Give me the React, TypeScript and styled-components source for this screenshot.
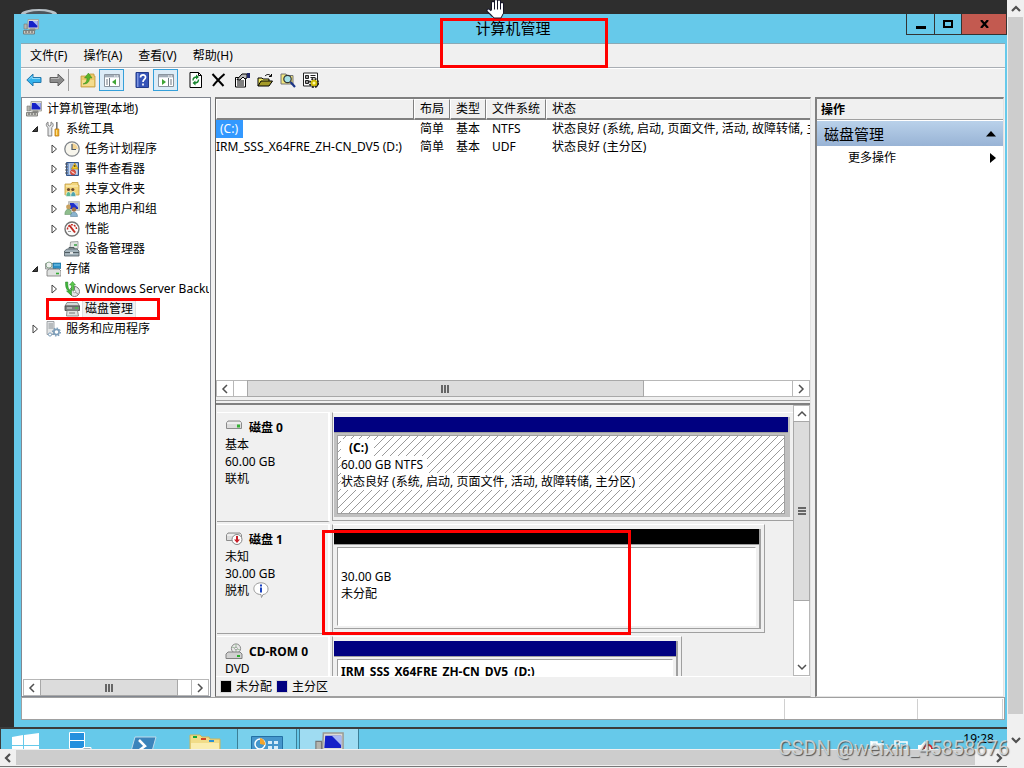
import React from "react";
import styled, { createGlobalStyle, css } from "styled-components";

const Global = createGlobalStyle`
  *, *::before, *::after { box-sizing: border-box; }
  body {
    margin: 0;
    overflow: hidden;
    background: #f0f0f0;
    color: #000;
    font: 12px/16px "Noto Sans", "Noto Sans CJK SC", sans-serif;
  }
  button { font: inherit; color: inherit; border: 0; padding: 0; background: none; }
  svg { display: block; flex: none; }
`;

const Viewer = styled.div`
  display: grid;
  grid-template-columns: minmax(0, 1fr) 17px;
  grid-template-rows: minmax(0, 1fr) 19px;
  height: 100vh;
  position: relative;
`;

const Desktop = styled.div`
  position: relative;
  display: flex;
  flex-direction: column;
  padding-top: 14px;
  background: #2e2e2e;
  overflow: hidden;
`;

const DesktopIcon = styled.svg`
  position: absolute;
  left: 21px;
  top: 8px;
`;

const Cursor = styled.svg`
  position: absolute;
  left: 486px;
  top: 0;
  z-index: 3;
`;

const Window = styled.main`
  position: relative;
  flex: 1;
  min-height: 0;
  display: flex;
  flex-direction: column;
  margin-left: 14px;
  padding: 0 2px 7px 7px;
  background: #66c9ea;
`;

const TitleBar = styled.header`
  position: relative;
  display: flex;
  justify-content: center;
  height: 29px;
  flex: none;
`;

const TitleIcon = styled.span`
  position: absolute;
  left: 2px;
  top: 5px;
`;

const Title = styled.h1`
  margin: 0;
  font-size: 15px;
  line-height: 28px;
  font-weight: 400;
`;

const Captions = styled.div`
  position: absolute;
  right: -2px;
  top: 0;
  display: flex;
  border: 1px solid #333;
  border-top: 0;
`;

const Caption = styled.button<{ $close?: boolean }>`
  display: grid;
  place-items: center;
  width: ${(p) => (p.$close ? 45 : 27)}px;
  height: 20px;
  background: ${(p) => (p.$close ? "#c35a50" : "transparent")};
  & + & { border-left: 1px solid #333; }
`;

const Client = styled.div`
  flex: 1;
  min-height: 0;
  display: flex;
  flex-direction: column;
  background: #f0f0f0;
  border-top: 1px solid #8aa9b5;
`;

const MenuBar = styled.nav`
  display: flex;
  height: 24px;
  flex: none;
  padding-left: 1px;
  border-bottom: 1px solid #a9aeb4;
`;

const MenuItem = styled.button`
  padding: 0 8px;
  line-height: 23px;
`;

const ToolBar = styled.div`
  display: flex;
  align-items: center;
  height: 29px;
  flex: none;
  padding: 0 1px 6px;
  border-top: 1px solid #fff;
`;

const Tool = styled.button<{ $on?: boolean }>`
  display: grid;
  place-items: center;
  width: ${(p) => (p.$on ? 25 : 23)}px;
  height: 22px;
  ${(p) =>
    p.$on &&
    css`
      border: 1px solid #35a0da;
      background: #dcecf7;
    `}
`;

const ToolGap = styled.span<{ $line?: boolean }>`
  width: ${(p) => (p.$line ? 8 : 6)}px;
  height: 22px;
  border-left: ${(p) => (p.$line ? "1px solid #a0a0a0" : "0")};
`;

const Panes = styled.div`
  flex: 1;
  min-height: 0;
  display: grid;
  grid-template-columns: 190px minmax(0, 1fr) 189px;
  column-gap: 4px;
  padding-right: 1px;
`;

const TreePane = styled.section`
  display: flex;
  flex-direction: column;
  min-height: 0;
  padding: 1px 1px 0;
  background: #fff;
  border: 1px solid #828790;
`;

const TreeList = styled.ul`
  flex: 1;
  margin: 0;
  padding: 0;
  list-style: none;
  overflow: hidden;
`;

const TreeRow = styled.li<{ $level: number }>`
  position: relative;
  display: flex;
  align-items: center;
  height: 20px;
  padding-left: ${(p) => [3, 5, 24][p.$level]}px;
  white-space: nowrap;
`;

const Twisty = styled.span`
  display: grid;
  place-items: center;
  flex: none;
  width: 14px;
  margin-right: 3px;
`;

const TreeLabel = styled.span<{ $selected?: boolean }>`
  flex: none;
  margin-left: 3px;
  padding: 0 2px;
  line-height: 18px;
  background: ${(p) => (p.$selected ? "#f0f0f0" : "transparent")};
  outline: ${(p) => (p.$selected ? "1px solid #dedede" : "0")};
`;

const CenterPane = styled.section`
  display: flex;
  flex-direction: column;
  min-height: 0;
  min-width: 0;
  border: 1px solid #a0a0a0;
  border-top: 2px solid #808080;
  border-right: 1px solid #e3e3e3;
  border-left-color: #696969;
`;

const VolumeArea = styled.div`
  flex: 1;
  min-height: 0;
  overflow: hidden;
  background: #fff;
`;

const VolumeTable = styled.table`
  width: 100%;
  table-layout: fixed;
  border-collapse: separate;
  border-spacing: 0;
  white-space: nowrap;
`;

const VolumeCol = styled.col<{ $w?: number }>`
  width: ${(p) => (p.$w ? p.$w + "px" : "auto")};
`;

const HeadCell = styled.th`
  height: 21px;
  padding: 0 0 0 5px;
  font-weight: 400;
  text-align: left;
  background: #f0f0f0;
  border: solid;
  border-width: 1px 1px 2px;
  border-color: #fff #808080 #808080 #fff;
  &:last-child { border-right: 0; }
`;

const Cell = styled.td`
  height: 18px;
  padding: 0 0 0 6px;
  line-height: 18px;
  overflow: hidden;
  &:first-child { padding: 0; }
`;

const Chosen = styled.span`
  display: inline-block;
  padding: 0 5px 0 4px;
  background: #3399ff;
  color: #fff;
`;

const Splitter = styled.div`
  height: 8px;
  flex: none;
  border-bottom: 2px solid #808080;
  background: linear-gradient(#f0f0f0 3px, #a0a0a0 3px, #a0a0a0 4px, #f0f0f0 4px);
`;

const DiskArea = styled.div`
  display: flex;
  height: 271px;
  flex: none;
`;

const DiskList = styled.div`
  flex: 1;
  min-width: 0;
  padding-top: 5px;
  overflow: hidden;
`;

const DiskRow = styled.article`
  display: grid;
  grid-template-columns: 116px minmax(0, 1fr);
  height: 112px;
`;

const DiskInfo = styled.div`
  margin: 2px 2px 0 1px;
  padding: 6px 0 0 8px;
  line-height: 17px;
  border-top: 1px solid #fff;
  border-right: 2px solid #fff;
  border-bottom: 1px solid #a0a0a0;
`;

const DiskName = styled.h2`
  display: flex;
  gap: 6px;
  margin: 0;
  font-size: 12px;
  line-height: 17px;
  font-weight: 700;
`;

const InfoLine = styled.div`
  display: flex;
  gap: 4px;
`;

const DiskFrame = styled.div<{ $fit: string }>`
  width: ${(p) => p.$fit};
  margin: 2px 0 1px;
  padding: 4px 3px 3px 1px;
  border: 1px solid #a0a0a0;
  border-top-color: #fff;
`;

const Volume = styled.div<{ $picked?: boolean }>`
  display: flex;
  flex-direction: column;
  height: 100px;
  background: ${(p) => (p.$picked ? "#c0c0c0" : "#f0f0f0")};
  border-right: 2px solid ${(p) => (p.$picked ? "#c0c0c0" : "#a0a0a0")};
  border-bottom: 1px solid ${(p) => (p.$picked ? "#c0c0c0" : "#a0a0a0")};
`;

const Stripe = styled.div<{ $color: string }>`
  height: 16px;
  flex: none;
  background: ${(p) => p.$color};
  border-bottom: 1px solid #a0a0a0;
`;

const VolumeBody = styled.div<{ $hatched?: boolean }>`
  flex: 1;
  margin: 2px 3px 2px;
  padding: 3px;
  line-height: 17px;
  white-space: pre;
  background-color: #fff;
  border: 1px solid #a0a0a0;
  ${(p) =>
    p.$hatched
      ? css`
          background-image: linear-gradient(135deg, transparent 46%, #9a9a9a 46%, #9a9a9a 54%, transparent 54%);
          background-size: 8px 8px;
        `
      : css`
          border-right-color: #fff;
          border-bottom-color: #fff;
        `}
`;

const VolumeText = styled.span`
  display: block;
  width: fit-content;
  min-height: 17px;
  padding-right: 4px;
  background: #fff;
`;

const VolumeName = styled(VolumeText)<{ $inset?: boolean }>`
  font-weight: 700;
  padding: 0 6px 0 ${(p) => (p.$inset ? 8 : 0)}px;
`;

const Legend = styled.footer`
  display: flex;
  align-items: center;
  gap: 4px;
  height: 20px;
  flex: none;
  padding-left: 4px;
  border-top: 1px solid #fff;
`;

const Swatch = styled.span<{ $color: string }>`
  width: 12px;
  height: 13px;
  border: 1px solid #d8d8d8;
  background: ${(p) => p.$color};
`;

const ActionsPane = styled.aside`
  background: #fff;
  border: 1px solid #e3e3e3;
  border-top: 2px solid #808080;
  border-left: 2px solid #808080;
`;

const ActionsHead = styled.h2`
  margin: 0 0 1px;
  padding-left: 4px;
  height: 21px;
  font-size: 12px;
  line-height: 21px;
  font-weight: 700;
  background: #f0f0f0;
  border-bottom: 1px solid #a0a0a0;
`;

const ActionsGroup = styled.button`
  display: flex;
  width: 100%;
  align-items: center;
  justify-content: space-between;
  height: 25px;
  padding: 0 7px;
  font-size: 15px;
  background: linear-gradient(#b9d1ea, #98b3d5);
`;

const ActionItem = styled.button`
  display: flex;
  width: 100%;
  align-items: center;
  justify-content: space-between;
  height: 23px;
  padding: 0 7px 0 31px;
`;

const StatusBar = styled.footer`
  display: flex;
  justify-content: flex-end;
  height: 23px;
  flex: none;
  padding: 1px 1px 0;
  background: #fff;
  border: 1px solid #a0a0a0;
`;

const StatusCell = styled.span`
  width: 133px;
  border-left: 1px solid #d0d0d0;
  &:last-child { width: 86px; border-right: 1px solid #d0d0d0; }
`;

/* Classic scroll bar, used along both axes */
const Bar = styled.div<{ $vertical?: boolean }>`
  display: flex;
  flex: none;
  flex-direction: ${(p) => (p.$vertical ? "column" : "row")};
  ${(p) => (p.$vertical ? "width: 17px;" : "height: 17px;")}
  background: #fff;
  border: 1px solid #b8b8b8;
`;

const BarArrow = styled.button<{ $vertical?: boolean }>`
  display: grid;
  place-items: center;
  flex: none;
  width: ${(p) => (p.$vertical ? "auto" : "16px")};
  height: ${(p) => (p.$vertical ? "16px" : "auto")};
`;

const BarSpace = styled.span<{ $grow: number }>`
  flex: ${(p) => p.$grow} 1 0;
`;

const BarThumb = styled.span<{ $grow: number }>`
  display: grid;
  place-items: center;
  flex: ${(p) => p.$grow} 1 0;
  background: #dcdcdc;
  outline: 1px solid #a8a8a8;
`;

const Divider = styled.span`
  flex: none;
  width: 1px;
  height: 1px;
  align-self: stretch;
  min-height: 100%;
  background: #b8b8b8;
`;

const PageBar = styled.div<{ $vertical?: boolean }>`
  display: flex;
  flex-direction: ${(p) => (p.$vertical ? "column" : "row")};
  padding: 1px;
  background: #f0f0f0;
  ${(p) => !p.$vertical && "border-bottom: 1px solid #777; margin-bottom: 1px; padding: 1px 0;"}
`;

const PageThumb = styled.span<{ $grow: number }>`
  flex: ${(p) => p.$grow} 1 0;
  background: #cdcdcd;
`;

const TaskBar = styled.footer`
  position: relative;
  display: flex;
  height: 22px;
  flex: none;
  border-top: 2px solid #3c3c3c;
  border-left: 1px solid #3c3c3c;
  background: #66c9ea;
  overflow: hidden;
`;

const Task = styled.button<{ $state?: "open" | "active" }>`
  display: flex;
  justify-content: center;
  align-items: flex-start;
  width: 60px;
  margin-right: 2px;
  padding-top: 3px;
  background: ${(p) => (p.$state === "active" ? "#9fdcf2" : p.$state === "open" ? "#79d0ec" : "none")};
  border: solid #3c7f97;
  border-width: ${(p) => (p.$state ? "0 1px" : "0")};
`;

const StartButton = styled(Task)`
  width: 38px;
  margin-right: 12px;
  justify-content: flex-end;
`;

const Tray = styled.div`
  display: flex;
  gap: 8px;
  margin-left: auto;
  padding: 2px 13px 0 0;
  & > svg { margin-top: 9px; }
`;

const Clock = styled.time`
  margin-left: 22px;
`;

const Watermark = styled.div`
  position: absolute;
  right: 15px;
  bottom: 8px;
  z-index: 4;
  font: 20px/24px Roboto, sans-serif;
  color: rgba(215, 220, 222, 0.85);
  text-shadow: 1px 1px 1px #555;
`;

const Mark = styled.span<{ $x: number; $y: number; $w: number; $h: number }>`
  position: absolute;
  left: ${(p) => p.$x}px;
  top: ${(p) => p.$y}px;
  width: ${(p) => p.$w}px;
  height: ${(p) => p.$h}px;
  border: 3px solid #f00;
  z-index: 2;
  pointer-events: none;
`;

/* ---------- drawings ---------- */

const Svg = ({ children, s = 16 }: { children: React.ReactNode; s?: number }) => (
  <svg width={s} height={s} viewBox="0 0 16 16" fill="none" aria-hidden="true">
    {children}
  </svg>
);

const Computer = ({ s = 16 }: { s?: number }) => (
  <Svg s={s}>
    <path d="M5 .5h10.500v9.500H4.500z" fill="#dcdcd4" stroke="#9a9a94" strokeWidth=".8" />
    <path d="M6 2h8.500v6.500H5.500z" fill="#1420c8" />
    <path d="M9.500 2h5v5z" fill="#a9b8f4" />
    <path d="M1 5h3v5H1z" fill="#b5b5ae" stroke="#777" strokeWidth=".6" />
    <path d="M7 9.500h5l1 2H6z" fill="#8a8a86" />
    <path d="M.5 11.500h11v3.500H.5z" fill="#c9c9c2" stroke="#6d6d6a" strokeWidth=".8" />
    <path d="M2 13h2M5 13h2M8 13h2" stroke="#555" />
  </Svg>
);

const Tools = () => (
  <Svg>
    <path d="M3 1v3l1.500 1L6 4V1c2.500 1 3 4 .8 5.500V15H3V6.500C.5 5 1 2 3 1z" fill="#e4e6e8" stroke="#777" strokeWidth=".9" />
    <path d="M11.800 1v7" stroke="#777" strokeWidth="1.600" />
    <path d="M10 8h3.800v7H10z" fill="#f3b52a" stroke="#b9770c" strokeWidth=".8" />
    <path d="M11.500 9v5" stroke="#fbe08c" />
  </Svg>
);

const ClockIcon = () => (
  <Svg>
    <circle cx="8" cy="8" r="7.200" fill="#f7f5ec" stroke="#80858a" strokeWidth="1.300" />
    <path d="M8 8V2.200A5.800 5.800 0 0 1 13.800 8z" fill="#f3d493" />
    <path d="M8 3v5.500h4" stroke="#4e5b69" strokeWidth="1.200" />
  </Svg>
);

const EventLog = () => (
  <Svg>
    <path d="M2.500 1.500h12v13h-12z" fill="#7fa0d0" stroke="#35568c" />
    <path d="M5 2.500h8.500v11H5z" fill="#c8d8ee" />
    <path d="M6 4h3M6 6h2M6 8h2" stroke="#6c88b8" />
    <path d="M1 3h3M1 6h3M1 9h3M1 12h3" stroke="#555" />
    <path d="M10.800 2l3.400 6H7.500z" fill="#f6cd2c" stroke="#b38708" strokeWidth=".7" />
    <path d="M10.800 4v2" stroke="#222" />
    <circle cx="9" cy="11.300" r="2.600" fill="#e05a48" stroke="#b82a20" strokeWidth=".6" />
    <path d="M7.500 10.500l3 2" stroke="#fff" />
  </Svg>
);

const SharedFolder = () => (
  <Svg>
    <path d="M1 3h6l1-1.500h6V4h1v10H1z" fill="#f3d67c" stroke="#c09a3c" strokeWidth=".8" />
    <path d="M2 5h12" stroke="#fff4c8" />
    <circle cx="4.500" cy="8.500" r="1.600" fill="#6d4a2e" />
    <circle cx="8.800" cy="8.500" r="1.600" fill="#6d4a2e" />
    <path d="M2 15.500c0-6.500 5-6.500 5 0z" fill="#5cb894" stroke="#fff" strokeWidth=".5" />
    <path d="M6.800 15.500c0-6.500 5-6.500 5 0z" fill="#4fa4ae" stroke="#fff" strokeWidth=".5" />
  </Svg>
);

const Users = () => (
  <Svg>
    <path d="M4.500.500h11v9h-11z" fill="#c8c8c2" stroke="#aaa" strokeWidth=".6" />
    <path d="M6 2h8v6H6z" fill="#2030cc" />
    <path d="M9.500 2H14v4.500z" fill="#9caef0" />
    <circle cx="4.500" cy="6" r="2.400" fill="#c9a15f" />
    <circle cx="10" cy="8.500" r="2.200" fill="#a47246" />
    <path d="M.800 13.500c0-7 7-7 7 0z" fill="#8fbd8c" stroke="#5a8a60" strokeWidth=".5" />
    <path d="M6.500 15.500c0-6 7-6 7 0z" fill="#8bb4cf" stroke="#48738f" strokeWidth=".5" />
  </Svg>
);

const Gauge = () => (
  <Svg>
    <circle cx="8" cy="8" r="7" fill="#fafafa" stroke="#727272" strokeWidth="1.400" />
    <path d="M3.500 8.500A4.500 4.500 0 0 1 12.500 8" stroke="#c32a22" strokeWidth="1.500" strokeDasharray="2 1" />
    <path d="M5.500 4.500l5.500 7" stroke="#c32a22" strokeWidth="2" />
    <path d="M4 10.500h3" stroke="#999" />
  </Svg>
);

const Device = () => (
  <Svg>
    <path d="M6.500 1l7.500-.5v7H6z" fill="#e2e5e3" stroke="#8e928f" strokeWidth=".8" />
    <path d="M10 4h3" stroke="#36a040" strokeWidth="1.500" />
    <path d="M3 8h10l2 2v5H.5v-5z" fill="#a3b2ba" stroke="#4f5c62" strokeWidth=".8" />
    <path d="M5 8V6.500h5V8M1 11.500h14" stroke="#4f5c62" />
    <path d="M6 11h3v2H6z" fill="#e3e7e8" />
  </Svg>
);

const Storage = () => (
  <Svg>
    <path d="M.5 2.500h10V8H.5z" fill="#d3d6d5" stroke="#888" strokeWidth=".8" />
    <circle cx="4" cy="4" r="3" fill="#eef2ef" stroke="#739579" strokeWidth=".8" />
    <path d="M8 2h8v5.500H8z" fill="#2a8fc4" stroke="#1f6b95" strokeWidth=".6" />
    <path d="M9 4h6" stroke="#8ad0f0" />
    <path d="M2 9.500L4.500 8H14l2 2v5H2z" fill="#dfe1e0" stroke="#777" strokeWidth=".8" />
    <path d="M11 12.500h3" stroke="#35ad35" strokeWidth="1.600" />
  </Svg>
);

const Backup = () => (
  <Svg>
    <circle cx="10.500" cy="10.500" r="5" fill="#e4e6e6" stroke="#777" />
    <path d="M10.500 5.500v5l4 3" stroke="#8a8a8a" />
    <circle cx="10.500" cy="10.500" r="1.200" fill="#fff" stroke="#777" strokeWidth=".6" />
    <path d="M1.500 1c0 5 .5 7 3 9H2.500l5 4.500V8L6 9.500C4 8 3.800 5 3.800 1z" fill="#41b63c" stroke="#248024" strokeWidth=".5" />
    <path d="M9.500 9.500c.8-2 .5-4 .3-5.500h1.700L8.500.500 5.500 4h1.800c.2 2 .2 4 .2 5z" fill="#5cc94c" stroke="#248024" strokeWidth=".5" />
  </Svg>
);

const DiskManage = () => (
  <Svg>
    <path d="M3 1.500h10.500l2 3.500H1z" fill="#d5d8d7" stroke="#777" strokeWidth=".8" />
    <path d="M1 5h14.500v4.500H1z" fill="#7e8382" stroke="#444" strokeWidth=".8" />
    <path d="M3 7h5" stroke="#ddd" />
    <path d="M11 7h3" stroke="#48c048" strokeWidth="1.400" />
    <path d="M3 9.500h10.500l1 5.500h-12z" fill="#dfe1e0" stroke="#777" strokeWidth=".8" />
    <path d="M5 12h6" stroke="#777" />
  </Svg>
);

const Services = () => (
  <Svg>
    <path d="M2 .5h7v13H2z" fill="#e4e6e7" stroke="#8b9195" strokeWidth=".8" />
    <path d="M3.500 3H8M3.500 5H8M3.500 7H8" stroke="#8b9195" />
    <circle cx="11.500" cy="11" r="2.600" fill="#fff" stroke="#7c9db9" strokeWidth="1.600" />
    <circle cx="11.500" cy="11" r="3.900" stroke="#7c9db9" strokeWidth="1.200" strokeDasharray="1.500 1.500" />
    <circle cx="5" cy="13.500" r="1.600" fill="#fff" stroke="#7c9db9" />
  </Svg>
);

const Arrow = ({ back }: { back?: boolean }) => (
  <Svg>
    <path
      d={back ? "M.8 8L7 2v3.500h8v5H7V14z" : "M15.200 8L9 2v3.500H1v5h8V14z"}
      fill={back ? "#35b2ec" : "#8b8b8b"}
      stroke={back ? "#2679ac" : "#606060"}
    />
    <path d={back ? "M3 7.500L6 4.500v2h8" : "M2 6.500h8v-2"} stroke={back ? "#91dcfa" : "#b8b8b8"} />
  </Svg>
);

const UpFolder = () => (
  <Svg>
    <path d="M1 4h8l1-2h4v2h1v11H1z" fill="#ebc869" stroke="#c29a3e" strokeWidth=".8" />
    <path d="M2 8h12v6H2z" fill="#f5dc8d" />
    <path d="M3 12c3-1 4-3 4-6H4.500L8.500 1 12 6H9.500c0 4-2 6-6.500 6z" fill="#58b52a" stroke="#388518" strokeWidth=".5" />
  </Svg>
);

const PaneIcon = ({ right }: { right?: boolean }) => (
  <Svg>
    <path d="M.5 2.500h15v12H.5z" fill="#fff" stroke="#8a949e" />
    <path d="M1 3h14v3H1z" fill="#a3adb8" />
    <path d="M1 5.500h14" stroke="#dfe4e9" />
    <path d="M10 4h1.500M12.500 4H14" stroke="#fff" />
    <path d={right ? "M10.500 6v8M12 8h2M12 10h2M12 12h2" : "M5.500 6v8M2 8h2M2 10h2M2 12h2"} stroke="#6f7984" />
    <path d={right ? "M4 7v6l4-3z" : "M12 7v6l-4-3z"} fill="#3fa535" />
  </Svg>
);

const Help = () => (
  <Svg>
    <path d="M2 .5h12.500v15H2z" fill="#3554b8" stroke="#233c8c" />
    <path d="M3 1h1.500v14H3z" fill="#7c94e0" />
    <path d="M6.500 5.500C6.500 2 12 2 11.500 5.500 11.500 7.500 9 7.500 9 10M9 11.500v2" stroke="#fff" strokeWidth="1.700" />
  </Svg>
);

const Refresh = () => (
  <Svg>
    <path d="M2 .5h8.500l3 3v12H2z" fill="#fff" stroke="#000" />
    <path d="M10.500.5v3h3" stroke="#000" />
    <path d="M5 8.500c0-3 2-3.500 4-3.500M10.500 7.500c0 3-2 3.500-4 3.500" stroke="#16852d" strokeWidth="1.400" />
    <path d="M8 2.500v5L11 5zM7.500 8.500v5L4.500 11z" fill="#16852d" />
  </Svg>
);

const Delete = () => (
  <Svg>
    <path d="M1.500 2l11 12M13.500 2C9 6 5 10 2 14" stroke="#000" strokeWidth="2" />
  </Svg>
);

const Properties = () => (
  <Svg>
    <path d="M1.500 5.500h10v9.500h-10z" fill="#fff" stroke="#000" />
    <path d="M3 9h7M3 11h7M3 13h7" stroke="#000" />
    <path d="M3 7.500L8 2h5v4l-2 1-2-2-3 3z" fill="#bbb" stroke="#000" />
    <path d="M13 1h3v5h-3z" fill="#222a6a" />
  </Svg>
);

const OpenFolder = () => (
  <Svg>
    <path d="M1 14V6h4l1 1h6v2" fill="#f2eb63" stroke="#000" />
    <path d="M1 14l3-5h11.500l-3.500 5z" fill="#a49a28" stroke="#000" />
    <path d="M8 4c2-2 4-2 6 0M14.500 2v2.500H12" stroke="#000" />
  </Svg>
);

const Search = () => (
  <Svg>
    <path d="M1 2h5l1 1.500h6V12H1z" fill="#f1e67d" stroke="#777" />
    <circle cx="7.500" cy="7" r="3.700" fill="#a5e1e6" stroke="#333" strokeWidth="1.200" />
    <path d="M10.500 10l4.500 5" stroke="#1b3487" strokeWidth="2.200" />
  </Svg>
);

const Settings = () => (
  <Svg>
    <path d="M.5 1h14v13H.5z" fill="#fff" stroke="#222" />
    <path d="M2.500 3.500h3v3h-3zM2.500 8.500h3v3h-3z" stroke="#222" fill="#999" />
    <path d="M7.500 3.500h5M7.500 5.500h5" stroke="#222" strokeWidth="1.200" />
    <circle cx="11" cy="11" r="3.800" stroke="#222" strokeWidth="2.600" strokeDasharray="1.800 1.200" />
    <circle cx="11" cy="11" r="2.400" fill="#fff7a0" stroke="#cdb900" strokeWidth="1.800" />
  </Svg>
);

const Drive = ({ kind }: { kind: "disk" | "offline" | "cd" }) => (
  <svg width="18" height="17" viewBox="0 0 18 17" fill="none" aria-hidden="true">
    {kind === "cd" ? (
      <>
        <circle cx="11" cy="5.500" r="4.600" fill="#e8e8e8" stroke="#8a8a8a" />
        <path d="M11 1v9M7 4l8 3" stroke="#9fbf9f" />
        <circle cx="11" cy="5.500" r="1.300" fill="#fff" stroke="#777" strokeWidth=".6" />
        <path d="M3 9h12l2 2v4.500H1V11z" fill="#d0d0d0" stroke="#808080" />
        <path d="M12 13h3" stroke="#2faf2f" strokeWidth="2" />
      </>
    ) : (
      <>
        <path d="M3 2h12l1.500 2v5.500h-15V4z" fill="#dcdcdc" stroke="#8b8b8b" />
        <path d="M2 4h14" stroke="#fff" />
        {kind === "disk" ? (
          <path d="M12 7h3" stroke="#35b135" strokeWidth="3" />
        ) : (
          <>
            <circle cx="12" cy="8.500" r="5" fill="#fff" stroke="#888" />
            <path d="M11 5h2v3.500h2l-3 3.500-3-3.500h2z" fill="#c81e28" />
          </>
        )}
      </>
    )}
  </svg>
);

const InfoBubble = () => (
  <Svg>
    <path d="M8 .8c9 0 9 11.200 2 11.700L8.500 15.500 8 12.500C-1.500 12.500-1.500.8 8 .8z" fill="#fff" stroke="#999" />
    <path d="M8 2.500v2M8 5.500v5" stroke="#1a42c0" strokeWidth="2" />
  </Svg>
);

const chevrons = {
  left: "M10 4L6 8l4 4",
  right: "M6 4l4 4-4 4",
  up: "M4 10l4-4 4 4",
  down: "M4 6l4 4 4-4",
};

const Chevron = ({ to, bold }: { to: keyof typeof chevrons; bold?: boolean }) => (
  <svg width="16" height="16" viewBox="0 0 16 16" fill="none" aria-hidden="true">
    <path d={chevrons[to]} stroke="#505050" strokeWidth={bold ? 2.2 : 1.5} />
  </svg>
);

const Grip = ({ vertical }: { vertical?: boolean }) => (
  <svg width="8" height="8" viewBox="0 0 8 8" aria-hidden="true">
    <path d={vertical ? "M0 1h8M0 4h8M0 7h8" : "M1 0v8M4 0v8M7 0v8"} stroke="#666" strokeWidth="2" />
  </svg>
);

const ScrollBar = ({ before, thumb, after, vertical }: { before: number; thumb: number; after: number; vertical?: boolean }) => (
  <Bar $vertical={vertical}>
    <BarArrow $vertical={vertical} aria-label={vertical ? "向上" : "向左"}>
      <Chevron to={vertical ? "up" : "left"} />
    </BarArrow>
    {!vertical && <Divider />}
    <BarSpace $grow={before} />
    <BarThumb $grow={thumb}>
      <Grip vertical={vertical} />
    </BarThumb>
    <BarSpace $grow={after} />
    {!vertical && <Divider />}
    <BarArrow $vertical={vertical} aria-label={vertical ? "向下" : "向右"}>
      <Chevron to={vertical ? "down" : "right"} />
    </BarArrow>
  </Bar>
);

/* ---------- content ---------- */

type Node = { level: number; icon: React.ReactNode; label: string; state?: "open" | "closed"; selected?: boolean };

const tree: Node[] = [
  { level: 0, icon: <Computer />, label: "计算机管理(本地)" },
  { level: 1, icon: <Tools />, label: "系统工具", state: "open" },
  { level: 2, icon: <ClockIcon />, label: "任务计划程序", state: "closed" },
  { level: 2, icon: <EventLog />, label: "事件查看器", state: "closed" },
  { level: 2, icon: <SharedFolder />, label: "共享文件夹", state: "closed" },
  { level: 2, icon: <Users />, label: "本地用户和组", state: "closed" },
  { level: 2, icon: <Gauge />, label: "性能", state: "closed" },
  { level: 2, icon: <Device />, label: "设备管理器" },
  { level: 1, icon: <Storage />, label: "存储", state: "open" },
  { level: 2, icon: <Backup />, label: "Windows Server Backup", state: "closed" },
  { level: 2, icon: <DiskManage />, label: "磁盘管理", selected: true },
  { level: 1, icon: <Services />, label: "服务和应用程序", state: "closed" },
];

const columns = ["", "布局", "类型", "文件系统", "状态"];
const widths = [198, 36, 36, 60, undefined];
const volumes = [
  ["(C:)", "简单", "基本", "NTFS", "状态良好 (系统, 启动, 页面文件, 活动, 故障转储, 主分区)"],
  ["IRM_SSS_X64FRE_ZH-CN_DV5 (D:)", "简单", "基本", "UDF", "状态良好 (主分区)"],
];

const disks = [
  {
    kind: "disk" as const,
    name: "磁盘 0",
    info: ["基本", "60.00 GB", "联机"],
    fit: "calc(100% + 1px)",
    color: "#000080",
    picked: true,
    volume: "(C:)",
    lines: ["60.00 GB NTFS", "状态良好 (系统, 启动, 页面文件, 活动, 故障转储, 主分区)"],
  },
  {
    kind: "offline" as const,
    name: "磁盘 1",
    info: ["未知", "30.00 GB", "脱机"],
    fit: "94%",
    color: "#000",
    volume: "",
    lines: ["30.00 GB", "未分配"],
  },
  {
    kind: "cd" as const,
    name: "CD-ROM 0",
    info: ["DVD"],
    fit: "76%",
    color: "#000080",
    volume: "IRM_SSS_X64FRE_ZH-CN_DV5  (D:)",
    lines: [],
  },
];

export default function App() {
  return (
    <Viewer>
      <Global />
      <Desktop>
        <DesktopIcon width="37" height="12" viewBox="0 0 37 12">
          <ellipse cx="18" cy="6" rx="18" ry="5" fill="#b9c2c8" />
          <ellipse cx="18" cy="7" rx="14" ry="4" fill="#4b555c" />
        </DesktopIcon>
        <Cursor width="19" height="19" viewBox="0 0 19 19" fill="none" strokeLinecap="round" strokeLinejoin="round">
          <path d="M7 3v7M10 1v8M13 1.500v8M16 4v8M2.500 10.500L7 15" stroke="#16162a" strokeWidth="4" />
          <path d="M6 9h11v5l-2 4H8l-4-5z" fill="#fff" stroke="#16162a" />
          <path d="M7 3v8M10 1v9M13 1.500v9M16 4v9M2.500 10.500L8 15.500" stroke="#fff" strokeWidth="2" />
        </Cursor>

        <Window>
          <TitleBar>
            <TitleIcon>
              <Computer />
            </TitleIcon>
            <Title>计算机管理</Title>
            <Captions>
              <Caption aria-label="最小化">
                <svg width="12" height="12">
                  <path d="M1 9.500h10" stroke="#000" strokeWidth="3" />
                </svg>
              </Caption>
              <Caption aria-label="最大化">
                <svg width="10" height="8">
                  <path d="M1 1h8v6H1z" fill="none" stroke="#000" strokeWidth="2" />
                </svg>
              </Caption>
              <Caption $close aria-label="关闭">
                <svg width="9" height="8">
                  <path d="M1 0l7 8M8 0L1 8" stroke="#000" strokeWidth="2.200" />
                </svg>
              </Caption>
            </Captions>
          </TitleBar>
          <Mark $x={426} $y={4} $w={168} $h={50} />

          <Client>
            <MenuBar>
              {["文件(F)", "操作(A)", "查看(V)", "帮助(H)"].map((m) => (
                <MenuItem key={m}>{m}</MenuItem>
              ))}
            </MenuBar>
            <ToolBar>
              <Tool aria-label="后退"><Arrow back /></Tool>
              <Tool aria-label="前进"><Arrow /></Tool>
              <ToolGap $line />
              <Tool aria-label="上一级"><UpFolder /></Tool>
              <Tool $on aria-label="显示控制台树"><PaneIcon /></Tool>
              <ToolGap />
              <Tool aria-label="帮助"><Help /></Tool>
              <Tool $on aria-label="显示操作窗格"><PaneIcon right /></Tool>
              <ToolGap />
              <Tool aria-label="刷新"><Refresh /></Tool>
              <Tool aria-label="删除"><Delete /></Tool>
              <Tool aria-label="属性"><Properties /></Tool>
              <Tool aria-label="打开"><OpenFolder /></Tool>
              <Tool aria-label="浏览"><Search /></Tool>
              <Tool aria-label="设置"><Settings /></Tool>
            </ToolBar>

            <Panes>
              <TreePane>
                <TreeList>
                  {tree.map((n) => (
                    <TreeRow key={n.label} $level={n.level}>
                      {n.level > 0 && (
                        <Twisty>
                          {n.state && (
                            <svg width="8" height="10" viewBox="0 0 8 10" aria-hidden="true">
                              {n.state === "open" ? (
                                <path d="M6.500 2.500v5h-5z" fill="#404040" stroke="#202020" />
                              ) : (
                                <path d="M2 1v8l4.500-4z" fill="#fff" stroke="#404040" />
                              )}
                            </svg>
                          )}
                        </Twisty>
                      )}
                      {n.icon}
                      <TreeLabel $selected={n.selected}>{n.label}</TreeLabel>
                      {n.selected && <Mark $x={23} $y={-1} $w={114} $h={22} />}
                    </TreeRow>
                  ))}
                </TreeList>
                <ScrollBar before={0} thumb={138} after={14} />
              </TreePane>

              <CenterPane>
                <VolumeArea>
                  <VolumeTable>
                    <colgroup>
                      {widths.map((w, i) => (
                        <VolumeCol key={i} $w={w} />
                      ))}
                    </colgroup>
                    <thead>
                      <tr>
                        {columns.map((c) => (
                          <HeadCell key={c}>{c}</HeadCell>
                        ))}
                      </tr>
                    </thead>
                    <tbody>
                      {volumes.map((row, r) => (
                        <tr key={row[0]}>
                          {row.map((c, i) => (
                            <Cell key={i}>{r === 0 && i === 0 ? <Chosen>{c}</Chosen> : c}</Cell>
                          ))}
                        </tr>
                      ))}
                    </tbody>
                  </VolumeTable>
                </VolumeArea>
                <ScrollBar before={14} thumb={396} after={150} />
                <Splitter />
                <DiskArea>
                  <DiskList>
                    {disks.map((d) => (
                      <DiskRow key={d.name}>
                        <DiskInfo>
                          <DiskName>
                            <Drive kind={d.kind} />
                            {d.name}
                          </DiskName>
                          {d.info.map((line) => (
                            <InfoLine key={line}>
                              {line}
                              {line === "脱机" && <InfoBubble />}
                            </InfoLine>
                          ))}
                        </DiskInfo>
                        <DiskFrame $fit={d.fit}>
                          <Volume $picked={d.picked}>
                            <Stripe $color={d.color} />
                            <VolumeBody $hatched={d.picked}>
                              <VolumeName $inset={d.picked}>{d.volume}</VolumeName>
                              {d.lines.map((line) => (
                                <VolumeText key={line}>{line}</VolumeText>
                              ))}
                            </VolumeBody>
                          </Volume>
                        </DiskFrame>
                      </DiskRow>
                    ))}
                  </DiskList>
                  <ScrollBar vertical before={0} thumb={178} after={59} />
                </DiskArea>
                <Legend>
                  <Swatch $color="#000" />
                  未分配
                  <Swatch $color="#000080" />
                  主分区
                </Legend>
              </CenterPane>

              <ActionsPane>
                <ActionsHead>操作</ActionsHead>
                <ActionsGroup>
                  磁盘管理
                  <svg width="10" height="6" aria-hidden="true">
                    <path d="M0 5.500L5 0l5 5.500z" />
                  </svg>
                </ActionsGroup>
                <ActionItem>
                  更多操作
                  <svg width="6" height="10" aria-hidden="true">
                    <path d="M0 0l6 5-6 5z" />
                  </svg>
                </ActionItem>
              </ActionsPane>
            </Panes>
            <StatusBar>
              <StatusCell />
              <StatusCell />
            </StatusBar>
          </Client>
          <Mark $x={308} $y={516} $w={309} $h={105} />
        </Window>

        <TaskBar>
          <StartButton aria-label="开始">
            <svg width="27" height="24" viewBox="0 0 27 24">
              <path d="M0 5l11-2v10H0zM12 3L27 1v12H12zM0 14h11v10L0 22zM12 14h15v10l-15-2z" fill="#fff" />
            </svg>
          </StartButton>
          <Task aria-label="服务器管理器">
            <svg width="32" height="24" viewBox="0 0 32 24">
              <path d="M4.500.500h15v8h-15zM4.500 8.500h15v8h-15z" fill="#2490de" stroke="#fff" />
              <path d="M18 15.500h8v4h-8z" fill="#a8b4bb" stroke="#fff" />
            </svg>
          </Task>
          <Task aria-label="PowerShell">
            <svg width="28" height="24" viewBox="0 0 28 24">
              <path d="M6 5h21l-5 18H1z" fill="#3b84bb" stroke="#c1dcec" />
              <path d="M10 8l6 6-8 6" stroke="#fff" strokeWidth="2.500" fill="none" />
            </svg>
          </Task>
          <Task aria-label="文件资源管理器">
            <svg width="32" height="24" viewBox="0 0 32 24">
              <path d="M1 8V3h10l2 2h7l1 2h10v17H1z" fill="#f1dc88" stroke="#d0b65b" />
              <path d="M4 5h4" stroke="#12a83a" strokeWidth="2" />
              <path d="M12 7h5" stroke="#d34727" strokeWidth="2" />
              <path d="M20 9h5" stroke="#2b91d3" strokeWidth="2" />
              <path d="M2 11h28v13H2z" fill="#faedb0" />
            </svg>
          </Task>
          <Task $state="open" aria-label="控制面板">
            <svg width="32" height="24" viewBox="0 0 32 24">
              <path d="M.5 4.500h31v19H.5z" fill="#4596cc" stroke="#2370a4" />
              <circle cx="9" cy="12" r="5" fill="none" stroke="#fff" strokeWidth="1.500" />
              <path d="M9 12V6a6 6 0 0 1 5 7z" fill="#f5a52a" />
              <path d="M17 10.500h4M23 10.500h4M17 15.500h4M23 15.500h4" stroke="#d4ecfa" strokeWidth="3" />
            </svg>
          </Task>
          <Task $state="active" aria-label="计算机管理">
            <Computer s={30} />
          </Task>
          <Tray>
            <svg width="16" height="16" viewBox="0 0 16 16" fill="none" stroke="#fff" strokeWidth="1.500">
              <path d="M2 1v15M3 2h5v2h6v6H3z" fill="#d7e8ef" />
            </svg>
            <svg width="15" height="16" viewBox="0 0 15 16" fill="none" stroke="#fff" strokeWidth="1.500">
              <path d="M2 1h4v5H2zM6 2h8v8H5M4 6v8" />
            </svg>
            <svg width="17" height="16" viewBox="0 0 17 16" fill="none">
              <path d="M2 5h3l4-4v12l-4-3H2z" fill="#fff" />
              <circle cx="12" cy="9" r="4" fill="#fff" stroke="#d22727" strokeWidth="2" />
            </svg>
            <Clock>19:28</Clock>
          </Tray>
        </TaskBar>
      </Desktop>

      <PageBar $vertical>
        <BarArrow $vertical aria-label="向上滚动"><Chevron to="up" bold /></BarArrow>
        <PageThumb $grow={697} />
        <BarSpace $grow={18} />
        <BarArrow $vertical aria-label="向下滚动"><Chevron to="down" bold /></BarArrow>
      </PageBar>
      <PageBar>
        <BarArrow aria-label="向左滚动"><Chevron to="left" bold /></BarArrow>
        <PageThumb $grow={957} />
        <BarSpace $grow={16} />
        <BarArrow aria-label="向右滚动"><Chevron to="right" bold /></BarArrow>
      </PageBar>
      <Watermark>CSDN @weixin_45858676</Watermark>
    </Viewer>
  );
}
